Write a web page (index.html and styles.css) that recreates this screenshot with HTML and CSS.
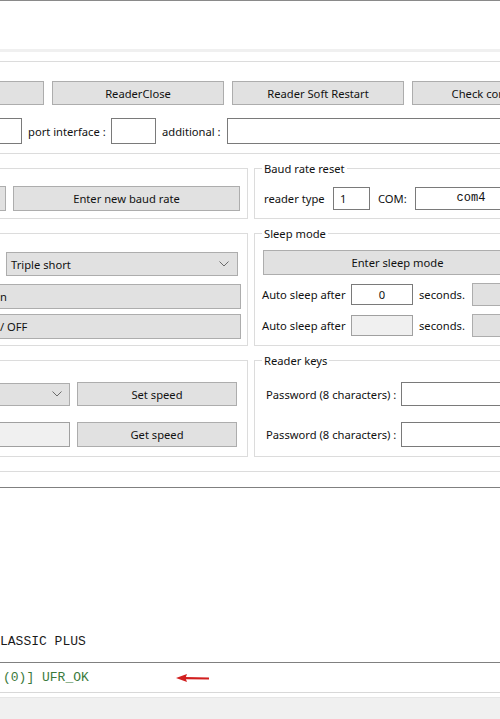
FILE: index.html
```html
<!DOCTYPE html>
<html lang="en">
<head>
    <meta charset="UTF-8">
    <meta name="viewport" content="width=device-width, initial-scale=1.0">
    <title>uFR Reader Tool</title>
    <link rel="stylesheet" href="styles.css">
</head>
<body>
    <div class="top-strip"></div>

    <div class="toolbar">
        <div class="btn-row">
            <button class="btn btn-cut"></button>
            <button class="btn btn-main">ReaderClose</button>
            <button class="btn btn-main">Reader Soft Restart</button>
            <button class="btn btn-main">Check connection</button>
        </div>
        <div class="port-row">
            <input class="field port-cut" type="text">
            <span class="lbl lbl-port">port interface :</span>
            <input class="field port-if" type="text">
            <span class="lbl lbl-add">additional :</span>
            <input class="field port-add" type="text">
        </div>
    </div>

    <div class="groups">
        <!-- row 1 -->
        <div class="group left g-baud">
            <div class="row">
                <span class="combo-cut"></span>
                <button class="btn baud-btn">Enter new baud rate</button>
            </div>
        </div>
        <div class="group right g-baud">
            <span class="legend">Baud rate reset</span>
            <div class="row">
                <span class="lbl lbl-type">reader type</span>
                <input class="field type-in" type="text" value="1">
                <span class="lbl lbl-com">COM:</span>
                <input class="field com-in" type="text" value="com4">
            </div>
        </div>

        <!-- row 2 -->
        <div class="group left g-signal">
            <div class="combo signal-combo">
                <span>Triple short</span>
                <svg class="chev" width="10" height="6" viewBox="0 0 10 6"><polyline points="0.5,0.5 5,5 9.5,0.5" fill="none" stroke="#6a6a6a" stroke-width="1"/></svg>
            </div>
            <button class="btn btn-tail sig-btn1">n</button>
            <button class="btn btn-tail sig-btn2">/ OFF</button>
        </div>
        <div class="group right g-sleep">
            <span class="legend">Sleep mode</span>
            <button class="btn sleep-btn">Enter sleep mode</button>
            <div class="row sleep-row">
                <span class="lbl lbl-auto">Auto sleep after</span>
                <input class="field sleep-in" type="text" value="0">
                <span class="lbl lbl-sec">seconds.</span>
                <button class="btn sleep-set"></button>
            </div>
            <div class="row sleep-row second">
                <span class="lbl lbl-auto">Auto sleep after</span>
                <input class="field sleep-in off" type="text" disabled>
                <span class="lbl lbl-sec">seconds.</span>
                <button class="btn sleep-set"></button>
            </div>
        </div>

        <!-- row 3 -->
        <div class="group left g-speed">
            <div class="row">
                <div class="combo speed-combo">
                    <svg class="chev" width="10" height="6" viewBox="0 0 10 6"><polyline points="0.5,0.5 5,5 9.5,0.5" fill="none" stroke="#6a6a6a" stroke-width="1"/></svg>
                </div>
                <button class="btn speed-btn">Set speed</button>
            </div>
            <div class="row second-row">
                <input class="field speed-in off" type="text" disabled>
                <button class="btn speed-btn tall">Get speed</button>
            </div>
        </div>
        <div class="group right g-keys">
            <span class="legend">Reader keys</span>
            <div class="row">
                <span class="lbl lbl-pass">Password (8 characters) :</span>
                <input class="field pass-in" type="password">
            </div>
            <div class="row second-row">
                <span class="lbl lbl-pass">Password (8 characters) :</span>
                <input class="field pass-in tall" type="password">
            </div>
        </div>
    </div>

    <div class="log">
        <div class="log-line">LASSIC PLUS</div>
    </div>
    <div class="status">
        <span class="status-text">(0)] UFR_OK</span>
        <svg class="arrow" width="34" height="10" viewBox="0 0 34 10">
            <path d="M9 4 L33 4.4 L33 6.4 L9 6.2 Z" fill="#d21f1f"/>
            <path d="M0 5 L11 1 L9.5 5 L11 9 Z" fill="#d21f1f"/>
        </svg>
    </div>
    <div class="footer"></div>
</body>
</html>
```

FILE: styles.css
```css
body {
    margin: 0;
    width: 500px;
    height: 719px;
    overflow: hidden;
    background: #fff;
    font-family: "Noto Sans", sans-serif;
    font-size: 11.2px;
    color: #111;
}
button, input {
    font-family: inherit;
    font-size: inherit;
    color: inherit;
    margin: 0;
    box-sizing: border-box;
}
.top-strip {
    height: 48px;
    border-top: 1px solid #8a8a8a;
    border-bottom: 3px solid #f0f0f0;
}
.toolbar {
    margin-top: 9px;
    border-top: 1px solid #dcdcdc;
    border-bottom: 1px solid #dcdcdc;
    padding: 19px 0 9px;
}
.btn-row {
    display: flex;
    gap: 8px;
    height: 24px;
    white-space: nowrap;
}
.btn {
    background: #e1e1e1;
    border: 1px solid #adadad;
    padding: 0;
    height: 24px;
    flex-shrink: 0;
}
.btn-cut {
    width: 44px;
    border-left: none;
}
.btn-main {
    width: 172px;
}
.port-row {
    display: flex;
    align-items: center;
    margin-top: 13px;
    height: 26px;
    white-space: nowrap;
}
.field {
    border: 1px solid #7a7a7a;
    background: #fff;
    padding: 0 3px;
    flex-shrink: 0;
    outline: none;
}
.field.off {
    background: #f0f0f0;
    border-color: #a0a0a0;
}
.lbl {
    flex-shrink: 0;
    white-space: nowrap;
}
.port-cut {
    width: 22px;
    height: 26px;
    border-left: none;
}
.lbl-port {
    width: 83px;
    margin-left: 6px;
}
.port-if {
    width: 45px;
    height: 26px;
}
.lbl-add {
    width: 65px;
    margin-left: 6px;
}
.port-add {
    width: 300px;
    height: 26px;
}

/* group boxes */
.groups {
    display: grid;
    grid-template-columns: 248px 290px;
    column-gap: 6px;
    row-gap: 14px;
    padding: 14px 0 14px;
    border-bottom: 1px solid #dcdcdc;
}
.group {
    position: relative;
    border: 1px solid #dcdcdc;
    box-sizing: border-box;
}
.group.left {
    border-left: none;
}
.group.right {
    border-right: none;
}
.legend {
    position: absolute;
    top: -8px;
    left: 7px;
    padding: 0 2px;
    background: #fff;
    line-height: 16px;
}
.row {
    display: flex;
    align-items: center;
    height: 24px;
}
.g-baud {
    height: 51px;
    padding-top: 17px;
}
.combo-cut {
    width: 6px;
    height: 25px;
    box-sizing: border-box;
    background: #e1e1e1;
    border: 1px solid #adadad;
    border-left: none;
}
.baud-btn {
    width: 227px;
    height: 25px;
    margin-left: 7px;
}
.g-baud.right {
    padding-left: 9px;
    padding-top: 17px;
}
.lbl-type {
    width: 69px;
}
.type-in {
    width: 37px;
    height: 23px;
    padding-left: 6px;
}
.lbl-com {
    width: 37px;
    margin-left: 8px;
}
.com-in {
    width: 112px;
    height: 23px;
    text-align: center;
    font-family: "Liberation Mono", monospace;
    font-size: 12px;
}

.g-signal {
    height: 113px;
    padding-top: 18px;
    display: flex;
    flex-direction: column;
    align-items: flex-start;
}
.combo {
    display: flex;
    align-items: center;
    justify-content: space-between;
    box-sizing: border-box;
    background: #e1e1e1;
    border: 1px solid #adadad;
    flex-shrink: 0;
}
.signal-combo {
    width: 232px;
    height: 24px;
    margin-left: 6px;
    padding: 0 8px 0 4px;
}
.chev {
    display: block;
}
.btn-tail {
    width: 241px;
    height: 25px;
    text-align: left;
    border-left: none;
}
.sig-btn1 {
    margin-top: 8px;
}
.sig-btn2 {
    margin-top: 5px;
}
.g-sleep {
    height: 113px;
    padding: 16px 0 0 8px;
}
.sleep-btn {
    display: block;
    width: 269px;
    height: 25px;
}
.sleep-row {
    height: 23px;
    margin-top: 8px;
    margin-left: -1px;
}
.lbl-auto {
    width: 89px;
}
.sleep-in {
    width: 62px;
    height: 21px;
    text-align: center;
}
.lbl-sec {
    width: 53px;
    margin-left: 6px;
}
.sleep-set {
    width: 60px;
    height: 23px;
}

.g-speed, .g-keys {
    height: 97px;
    padding-top: 21px;
}
.second-row {
    margin-top: 16px;
    height: 25px;
}
.speed-combo {
    width: 70px;
    height: 23px;
    border-left: none;
    justify-content: flex-end;
    padding-right: 7px;
}
.speed-btn {
    width: 160px;
    margin-left: 7px;
}
.speed-btn.tall {
    height: 25px;
}
.speed-in {
    width: 70px;
    height: 25px;
    border-left: none;
}
.g-keys {
    padding-left: 11px;
}
.lbl-pass {
    width: 135px;
}
.pass-in {
    width: 150px;
    height: 24px;
}
.pass-in.tall {
    height: 25px;
}

/* output log */
.log {
    margin-top: 15px;
    height: 176px;
    border-top: 1px solid #808080;
    border-bottom: 1px solid #808080;
    display: flex;
    flex-direction: column;
    justify-content: flex-end;
    box-sizing: border-box;
    padding-bottom: 12px;
}
.log-line, .status-text {
    font-family: "Liberation Mono", monospace;
    font-size: 13px;
    line-height: 16px;
    white-space: pre;
}
.log-line {
    color: #1a1a1a;
}
.status {
    display: flex;
    align-items: center;
    height: 29px;
    padding-left: 3px;
    border-bottom: 1px solid #d8d8d8;
}
.status-text {
    color: #3b7a3b;
}
.arrow {
    margin-left: 87px;
}
.footer {
    margin-top: 4px;
    height: 30px;
    background: #f0f0f0;
    border-top: 1px solid #e6e6e6;
}
```
